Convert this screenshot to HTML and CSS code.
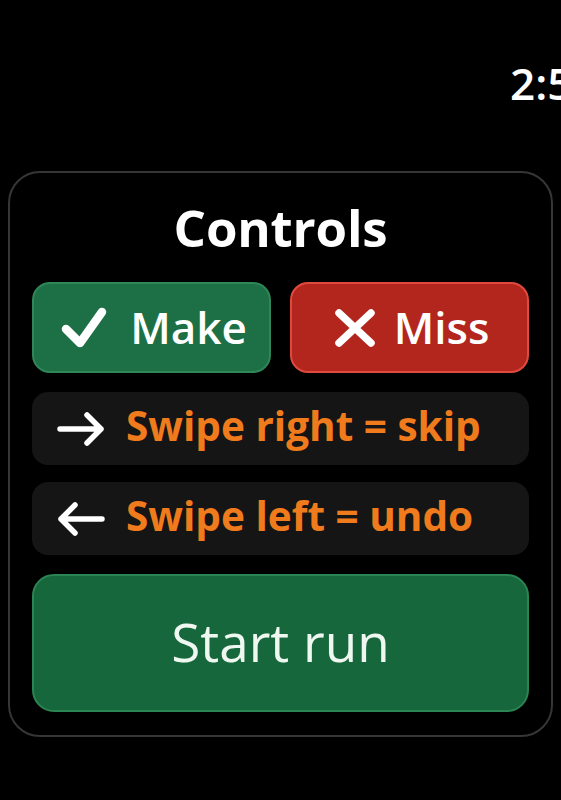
FILE: index.html
```html
<!DOCTYPE html>
<html lang="en">
<head>
<meta charset="utf-8">
<title>Controls</title>
<link rel="stylesheet" href="styles.css">
</head>
<body>
<div class="screen">
  <div class="status"><span class="time">2:50</span></div>
  <section class="card">
    <h1 class="title">Controls</h1>
    <div class="choices">
      <button class="choice make">
        <svg class="icon-check" viewBox="0 0 48 44" width="48" height="44"><path d="M6 23 L20 37 L42 6" fill="none" stroke="#fff" stroke-width="8.5" stroke-linecap="round" stroke-linejoin="round"/></svg>
        <span>Make</span>
      </button>
      <button class="choice miss">
        <svg class="icon-x" viewBox="0 0 42 40" width="42" height="40"><path d="M5 5 L37 35 M37 5 L5 35" fill="none" stroke="#fff" stroke-width="7.5" stroke-linecap="round"/></svg>
        <span>Miss</span>
      </button>
    </div>
    <div class="hint">
      <svg class="arrow" viewBox="0 0 50 38" width="50" height="38"><path d="M4 19 H45 M31 5 L45 19 L31 33" fill="none" stroke="#fff" stroke-width="5.5" stroke-linecap="round" stroke-linejoin="round"/></svg>
      <span>Swipe right = skip</span>
    </div>
    <div class="hint">
      <svg class="arrow" viewBox="0 0 50 38" width="50" height="38"><path d="M46 19 H5 M19 5 L5 19 L19 33" fill="none" stroke="#fff" stroke-width="5.5" stroke-linecap="round" stroke-linejoin="round"/></svg>
      <span>Swipe left = undo</span>
    </div>
    <button class="start">Start run</button>
  </section>
</div>
</body>
</html>
```

FILE: styles.css
```css
* { box-sizing: border-box; }
html, body {
  margin: 0;
  padding: 0;
  background: #000;
}
body {
  font-family: "Open Sans", "Liberation Sans", sans-serif;
  color: #fff;
  width: 561px;
  height: 800px;
  overflow: hidden;
}
.screen {
  padding: 0 8px;
}
.status {
  height: 171px;
  padding-top: 57px;
  padding-left: 510px;
  margin: 0 -8px;
  white-space: nowrap;
  overflow: hidden;
}
.time {
  font-size: 44px;
  line-height: 52px;
  font-weight: 600;
  color: #fff;
}
.card {
  border: 2px solid #363636;
  border-radius: 32px;
  padding: 23px 22px 23px;
  display: flex;
  flex-direction: column;
}
.title {
  margin: 0;
  text-align: center;
  font-size: 51px;
  line-height: 62px;
  font-weight: 700;
  letter-spacing: -0.2px;
}
.choices {
  margin-top: 24px;
  display: grid;
  grid-template-columns: 1fr 1fr;
  gap: 19px;
}
button {
  font-family: inherit;
  color: #fff;
  cursor: pointer;
}
.choice {
  height: 91px;
  border-radius: 18px;
  display: flex;
  align-items: center;
  justify-content: center;
  gap: 22px;
  font-size: 44px;
  font-weight: 600;
  padding: 0;
}
.choice svg { flex-shrink: 0; }
.choice span { line-height: 1; margin-top: -2px; }
.make {
  background: #1d7045;
  border: 2px solid #2f8656;
  padding-left: 4px;
}
.miss {
  background: #b3261e;
  border: 2px solid #e04a3e;
  gap: 18px;
  padding-left: 4px;
}
.hint {
  margin-top: 19px;
  height: 73px;
  background: #151515;
  border-radius: 16px;
  display: flex;
  align-items: center;
  padding-left: 24px;
  gap: 20px;
  color: #f07b1c;
  font-size: 40.5px;
  font-weight: 700;
}
.hint svg { flex-shrink: 0; }
.hint + .hint { margin-top: 17px; }
.hint span { line-height: 1; margin-top: -4px; }
.start {
  margin-top: 19px;
  height: 138px;
  background: #17673c;
  border: 2px solid #2a8552;
  border-radius: 22px;
  font-size: 53px;
  font-weight: 400;
  color: #eef7f0;
  padding: 0 0 4px;
}
```
